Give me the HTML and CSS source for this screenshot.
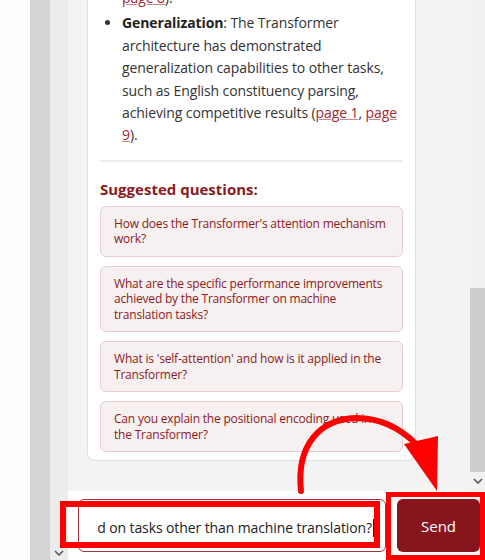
FILE: index.html
```html
<!DOCTYPE html>
<html>
<head>
<meta charset="utf-8">
<link rel="stylesheet" href="styles.css">
</head>
<body>
<div class="page">
  <div class="side-white"></div>
  <div class="side-thumb"></div>
  <div class="side-gutter">
    <svg class="chev" width="10" height="6" viewBox="0 0 10 6"><path d="M1 1 L5 5 L9 1" fill="none" stroke="#555" stroke-width="1.6"/></svg>
  </div>
  <div class="main">
    <div class="chat">
      <div class="messages">
        <div class="card">
          <div class="prev-line"><a href="#">page 8</a>).</div>
          <ul class="answer">
            <li><b>Generalization</b>: The Transformer architecture has demonstrated generalization capabilities to other tasks, such as English constituency parsing, achieving competitive results (<a href="#">page 1</a>, <a href="#">page 9</a>).</li>
          </ul>
          <hr class="divider">
          <h3 class="sq-title">Suggested questions:</h3>
          <div class="questions">
            <div class="q">How does the Transformer's attention mechanism work?</div>
            <div class="q">What are the specific performance improvements achieved by the Transformer on machine translation tasks?</div>
            <div class="q">What is 'self-attention' and how is it applied in the Transformer?</div>
            <div class="q">Can you explain the positional encoding used in the Transformer?</div>
          </div>
        </div>
      </div>
      <div class="vscroll">
        <div class="track"><div class="thumb"></div></div>
        <svg class="chev" width="10" height="6" viewBox="0 0 10 6"><path d="M1 1 L5 5 L9 1" fill="none" stroke="#555" stroke-width="1.6"/></svg>
      </div>
    </div>
    <div class="composer">
      <div class="input"><span>d on tasks other than machine translation?</span><span class="caret"></span></div>
      <button class="send">Send</button>
    </div>
  </div>
</div>
<svg class="annot" width="485" height="560" viewBox="0 0 485 560">
  <rect x="63" y="504" width="314" height="41" fill="none" stroke="#ff0000" stroke-width="6"/>
  <rect x="388.5" y="494.5" width="94" height="63" fill="none" stroke="#ff0000" stroke-width="5"/>
  <path d="M301 491 C 296 445, 320 419, 356 418 C 382 418, 402 430, 416 444" fill="none" stroke="#ff0000" stroke-width="6" stroke-linecap="round"/>
  <polygon points="404,444 438,436 437,491" fill="#ff0000"/>
</svg>
</body>
</html>
```
FILE: styles.css
```css
* { box-sizing: border-box; }
html, body { margin: 0; padding: 0; }
body {
  width: 485px;
  height: 560px;
  overflow: hidden;
  position: relative;
  font-family: "Open Sans", "Noto Sans", sans-serif;
  color: #333;
  background: #fff;
}
.page { display: flex; width: 485px; height: 560px; }
.side-white { width: 30px; background: #fdfdfd; }
.side-thumb { width: 20px; background: #d4d4d4; }
.side-gutter {
  width: 18px;
  background: #ececec;
  display: flex;
  flex-direction: column;
  justify-content: flex-end;
  align-items: center;
  padding-bottom: 4px;
}
.main { flex: 1; display: flex; flex-direction: column; min-width: 0; }
.chat { height: 491px; display: flex; background: #f3f3f3; }
.messages { flex: 1; overflow: hidden; padding-left: 19px; padding-right: 0; }
.card {
  width: 329px;
  background: #fff;
  border: 1px solid #dedede;
  border-top: none;
  border-radius: 0 0 8px 8px;
  padding: 0 12px 8px 12px;
  margin-top: -13px;
}
.prev-line { padding-left: 22px; font-size: 14px; line-height: 22.4px; letter-spacing: -0.1px; }
a { color: #a3272f; text-decoration: underline; text-decoration-color: #c9888c; }
.answer { margin: 3px 0 0 0; padding-left: 22px; font-size: 14px; line-height: 22.4px; letter-spacing: -0.1px; }
.answer li { padding: 0; }
.answer b { color: #222; }
.divider { border: none; height: 2px; background: #ececec; margin: 13px 0 0 0; }
.sq-title { margin: 16px 0 6px 0; font-size: 15px; font-weight: 700; color: #8b1a22; line-height: 22px; }
.questions { display: flex; flex-direction: column; gap: 9px; }
.q {
  background: #f7f0f0;
  border: 1px solid #e8cdd0;
  border-radius: 6px;
  padding: 9px 12px 9px 13px;
  font-size: 12px;
  letter-spacing: -0.2px;
  line-height: 15.5px;
  color: #8b1a22;
}
.vscroll {
  width: 15px;
  background: #f1f1f1;
  display: flex;
  flex-direction: column;
  align-items: center;
}
.track { flex: 1; width: 15px; padding-top: 288px; padding-bottom: 2px; display: flex; }
.thumb { flex: 1; background: #cdcdcd; }
.vscroll .chev { margin: 4px 0 7px 0; }
.composer {
  flex: 1;
  background: #fff;
  display: flex;
  align-items: center;
  padding: 0 5px 0 10px;
  gap: 11px;
}
.input {
  width: 308px;
  height: 53px;
  border: 1px solid #a3343c;
  border-radius: 6px;
  display: flex;
  align-items: center;
  justify-content: flex-end;
  overflow: hidden;
  white-space: nowrap;
  padding-right: 11px;
  padding-top: 4px;
  font-size: 14px;
  letter-spacing: -0.1px;
  color: #222;
}
.caret { display: inline-block; width: 1px; height: 18px; background: #222; margin-left: 1px; }
.send {
  width: 83px;
  height: 53px;
  border: none;
  border-radius: 6px;
  background: #88141d;
  color: #fff;
  font-family: "Open Sans", "Noto Sans", sans-serif;
  font-size: 15px;
}
.annot { position: absolute; left: 0; top: 0; pointer-events: none; }
```
